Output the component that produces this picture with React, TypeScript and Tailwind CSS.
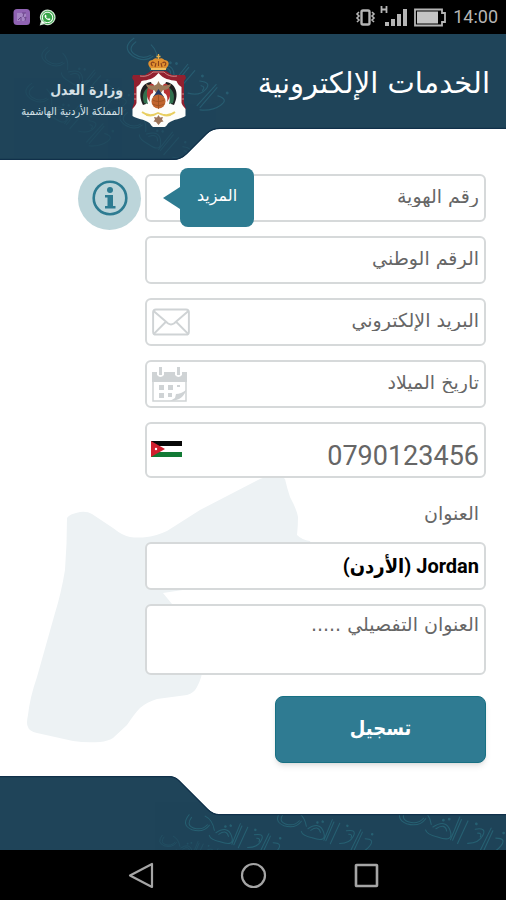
import type { InputHTMLAttributes, ReactNode } from "react";
import { FaWhatsapp } from "react-icons/fa";

const fieldClass =
  "block w-full rounded-md border-2 border-[#d6d9da] bg-white px-[5px] text-[#666] placeholder:text-[#666] placeholder:opacity-100 outline-none focus:border-[#2f7b92]";

function StatusBar() {
  return (
    <div dir="ltr" className="flex h-[34px] items-center justify-between bg-black pr-2 pl-[13px] text-[#b5b5b5]">
      <div className="flex items-center gap-2">
        <svg viewBox="0 0 18 18" className="size-[18px]" aria-hidden="true">
          <rect x="0.5" y="1" width="16.5" height="16" rx="3.5" fill="#9063b3" />
          <path d="M4 5h9v8H4z" fill="#a585c4" />
          <path d="M11 5l-1 4M9 5h4M5 12l3-3v4M11 10l2-1-1 4" stroke="#6b4589" strokeWidth="1" fill="none" />
        </svg>
        <span className="relative flex size-[17px] items-center justify-center">
          <svg viewBox="0 0 17 17" className="absolute inset-0 size-[17px]" aria-hidden="true">
            <path d="M8.7.5a7.8 7.8 0 1 1-3.6 14.7L.7 16.5l1.3-4.2A7.8 7.8 0 0 1 8.7.5z" fill="#cfe6d2" />
            <circle cx="8.7" cy="8.300" r="6.600" fill="#38a649" />
          </svg>
          <FaWhatsapp className="relative size-[13px] text-white" />
        </span>
      </div>
      <div className="flex items-center">
        <svg viewBox="0 0 92 24" className="h-6 w-[92px]" aria-hidden="true" fill="#b5b5b5">
          <rect x="6.500" y="5.500" width="8" height="14" rx="1.500" fill="none" stroke="#b5b5b5" strokeWidth="2.400" />
          <path d="M4 7l-2 2 2 2-2 2 2 2-2 2M17 7l2 2-2 2 2 2-2 2 2 2" fill="none" stroke="#b5b5b5" strokeWidth="1.600" />
          <path d="M26.500 1v7M31.500 1v7M26 4.500h6" stroke="#b5b5b5" strokeWidth="1.800" />
          <path d="M30 17h4v4h-4zM36 14h4v7h-4zM42 9h4v12h-4zM48 4h4v17h-4z" />
          <path d="M60 4.500h27v3.500h3v9h-3v3.500H60z" fill="none" stroke="#b5b5b5" strokeWidth="1.800" />
          <path d="M62 6.500h21v12H62z" fill="#c4c4c4" />
        </svg>
        <span className="ml-1.5 font-[Roboto,sans-serif] text-lg leading-6">14:00</span>
      </div>
    </div>
  );
}

function Emblem() {
  return (
    <svg viewBox="0 0 56 74" className="h-[74px] w-14 shrink-0" role="img" aria-label="شعار المملكة">
      <path d="M27.500 0v5M25.500 2.500h4" stroke="#e9b14a" strokeWidth="1.300" />
      <path d="M19.500 14c-4-4-2-8 2-8 2-2 4-2 6-1 2-1 4-1 6 1 4 0 6 4 2 8l-1 2h-14z" fill="#e0902f" />
      <path d="M21.500 12c-3-3 0-5 2-3M27.500 12V7M33.500 12c3-3 0-5-2-3M24 13l1-4M31 13l-1-4" stroke="#8c421c" strokeWidth="1.100" fill="none" />
      <path d="M20 15h15" stroke="#f1c468" strokeWidth="1.800" />
      <path d="M20 17h15l6 4h13l1 3-2 3v22l2 6H1l2-6V27l-2-3 1-3h12z" fill="#92202f" />
      <path d="M9 22c6 1 10-1 13-4h11c3 3 7 5 13 4" stroke="#d9a39e" strokeWidth="0.800" fill="none" />
      <path d="M27.500 19c5 6 11 7 18 8 1 3 3 5 5 6v16c1 3 3 4 4 6v7c-4 3-12 3-17 7-2 2-2 4-5 4h-9c-3 0-3-2-5-4-5-4-13-4-17-7v-7c1-2 3-3 4-6V33c2-1 4-3 5-6 7-1 12-2 17-8z" fill="#fdfdfb" />
      <path d="M3 40h3M3 45h3M50 40h3M50 45h3" stroke="#d9a39e" strokeWidth="0.800" />
      <path d="M12 51C6 39 11 29 20 28l2 5c-6 2-9 8-7 17z" fill="#1f1f20" />
      <path d="M13 49c-3-9 1-15 7-17l2 4c-5 2-7 7-5 14z" fill="#31704d" />
      <path d="M18 31c2-2 4-1 5 0l-1 8c-3 1-4 5-3 9-4-5-4-10-1-17z" fill="#b83334" />
      <path d="M43 51c6-12 1-22-8-23l-2 5c6 2 9 8 7 17z" fill="#1f1f20" />
      <path d="M42 49c3-9-1-15-7-17l-2 4c5 2 7 7 5 14z" fill="#31704d" />
      <path d="M37 31c-2-2-4-1-5 0l1 8c3 1 4 5 3 9 4-5 4-10 1-17z" fill="#b83334" />
      <path d="M15 30c6 2 8 2 11 0l1.500-3 1.500 3c3 2 5 2 11 0-1 5-5 6-8 6l-4.500 6-4.500-6c-3 0-7-1-8-6z" fill="#9b7a59" />
      <path d="M22 43l5.500-8 5.500 8z" fill="#243b66" />
      <circle cx="27.500" cy="47.500" r="7" fill="#c1652f" />
      <path d="M21.500 46c4 2 8 2 12 0M21.500 50c4 2 8 2 12 0M27.500 41v14" stroke="#995020" strokeWidth="0.800" fill="none" />
      <path d="M11 58c5 4 10 4 16 1 6 3 12 3 17-1M15 61c4 1 7 1 10-1M40 61c-4 1-7 1-10-1" stroke="#e9cf62" strokeWidth="1.800" fill="none" />
      <path d="M27.500 61l1.500 2.500 3-.5-1 2.500 1.500 2-2.500.5-2.500 3-2.500-3-2.500-.5 1.500-2-1-2.500 3 .5z" fill="#9c7358" />
    </svg>
  );
}

// faint band of curls that decorates the dark areas
function Flourish() {
  return (
    <g fill="none" strokeLinecap="round">
      <path d="M4 4q-6 12 6 14 12 1 16-8M20 2q8 2 12 12M34 16q10-10 16 0t-10 8q-10 0-12-4M56 2l-4 22M64 4l-5 22M72 10q10-4 8 4t-12 10M86 6l-6 24M92 14q10-2 6 6t-14 12" />
      <path d="M7 6q-4 9 4 10 9 1 13-6M37 17q7-7 10 0M58 4l-4 20M75 13q4-1 3 3M88 8l-5 22" />
      <path d="M42 8h.01M47 6h.01M72 5h.01M98 8h.01" strokeWidth="2.500" />
    </g>
  );
}

function Header() {
  return (
    <header className="relative h-[126px]">
      <svg viewBox="0 0 506 126" preserveAspectRatio="none" className="absolute inset-0 size-full" aria-hidden="true">
        <defs>
          <clipPath id="headerShape">
            <path d="M0 0h506v95H220q-8 0-13 5l-20 20q-6 6-14 6H0z" />
          </clipPath>
        </defs>
        <g clipPath="url(#headerShape)">
          <rect width="506" height="126" fill="#1f4459" />
          <g stroke="#2b677b">
            <g transform="translate(132 -2) rotate(28) scale(1.150)" opacity="0.700">
              <Flourish />
            </g>
            <g transform="translate(46 8) rotate(28)" opacity="0.250">
              <Flourish />
            </g>
            <g transform="translate(30 44) rotate(28)" opacity="0.200">
              <Flourish />
            </g>
            <g transform="translate(124 70) rotate(28)" opacity="0.300">
              <Flourish />
            </g>
          </g>
          <path d="M506 94.500H220q-8 0-13 5l-20 20q-6 6-14 6H0" fill="none" stroke="#10304a" strokeWidth="1.500" />
        </g>
      </svg>
      <div className="relative flex items-start justify-between pr-4 pl-[22px]">
        <h1 className="pt-[26px] text-[29px] leading-[46px] text-white">الخدمات الإلكترونية</h1>
        <div className="flex items-start gap-2 pt-5">
          <Emblem />
          <div className="w-[101px] pt-6 whitespace-nowrap text-[#d4e0e6] font-['DejaVu_Sans_Condensed','DejaVu_Sans',sans-serif]">
            <p className="text-sm leading-6 font-bold">وزارة العدل</p>
            <p className="text-[11px] leading-5">المملكة الأردنية الهاشمية</p>
          </div>
        </div>
      </div>
    </header>
  );
}

function Field({ label, icon, ...props }: { label: string; icon?: ReactNode } & InputHTMLAttributes<HTMLInputElement>) {
  return (
    <div className="relative min-w-0 flex-1">
      <input aria-label={label} placeholder={label} className={`${fieldClass} h-12 pb-1 text-[19px]`} {...props} />
      {icon}
    </div>
  );
}

function MailIcon() {
  return (
    <svg viewBox="0 0 40 30" className="absolute top-[10px] left-[6px] h-[29px] w-10" fill="none" stroke="#cfd3d5" strokeWidth="2" aria-hidden="true">
      <rect x="1.500" y="1.500" width="37" height="26" rx="3" />
      <path d="M2 3l15 13q3 2 6 0L38 3M2 27l13-13M38 27L25 14" />
    </svg>
  );
}

function CalendarIcon() {
  return (
    <svg viewBox="0 0 36 36" className="absolute top-[7px] left-[7px] size-9" fill="#cfd3d5" aria-hidden="true">
      <path d="M0 5h5v3q3.500 4 7 0V5h11v3q3.500 4 7 0V5h5v10H0z" />
      <path d="M7 0h3v8H7zM25 0h3v8h-3z" />
      <path d="M1 14v20h33V14" fill="none" stroke="#cfd3d5" strokeWidth="1.500" />
      <path d="M7 18h5v5H7zM16 18h5v5h-5zM25 18h3v2h-3zM7 26h5v5H7zM16 26h4v4h-4z" />
      <path d="M34 23q-5 4-10 4l-1 4-5 3q5 0 9-2 5-3 7-8z" />
    </svg>
  );
}

function Flag() {
  return (
    <svg viewBox="0 0 31 16" className="absolute top-[19px] left-[6px] h-4 w-[31px]" aria-hidden="true">
      <path d="M0 0h31v5H0z" fill="#080808" />
      <path d="M0 5h31v6H0z" fill="#fff" />
      <path d="M0 11h31v5H0z" fill="#127a35" />
      <path d="M0 0l14 8-14 8z" fill="#d01f2e" />
      <circle cx="5" cy="8" r="1.200" fill="#fff" />
    </svg>
  );
}

function MapShape() {
  return (
    <svg viewBox="0 0 300 270" className="absolute bottom-[32px] left-[26px] h-[270px] w-[300px]" aria-hidden="true">
      <path
        d="M41 44Q43 40 54 38Q61 37 66 40L87 54Q97 62 104 63Q112 64 121 63Q130 62 141 57L174 36L234 5Q252-2 259 5Q261 14 264 23Q271 36 272 43Q272 52 271 61Q276 66 284 67L294 95L137 119L146 130L176 190Q178 200 171 213Q168 219 161 221L131 225Q121 228 114 234Q109 239 101 251L87 264Q82 267 74 268Q60 269 47 267L11 259Q3 257 2 253Q0 250 2 241Q4 223 11 203L29 139Q35 120 39 96Q41 70 41 44Z"
        fill="#edf2f4"
      />
    </svg>
  );
}

function Footer() {
  return (
    <footer className="h-[74px]">
      <svg viewBox="0 0 506 74" preserveAspectRatio="none" className="block size-full" aria-hidden="true">
        <defs>
          <clipPath id="footerShape">
            <path d="M0 0h169q6 0 10 4l29 29q5 5 11 5h287v36H0z" />
          </clipPath>
        </defs>
        <g clipPath="url(#footerShape)">
          <rect width="506" height="74" fill="#1f4459" />
          <g stroke="#2a6d7e" opacity="0.700">
            <g transform="translate(186 34) rotate(12)">
              <Flourish />
            </g>
            <g transform="translate(278 30) rotate(12)">
              <Flourish />
            </g>
            <g transform="translate(400 26) rotate(12) scale(1.100)">
              <Flourish />
            </g>
            <g transform="translate(160 56) rotate(12) scale(0.700)" opacity="0.500">
              <Flourish />
            </g>
          </g>
          <path d="M0 .5h169q6 0 10 4l29 29q5 5 11 5h287" fill="none" stroke="#10304a" strokeWidth="1.500" />
        </g>
      </svg>
    </footer>
  );
}

function NavBar() {
  return (
    <nav dir="ltr" className="flex h-[50px] items-center justify-center gap-[86px] bg-black text-[#a5a5a5]">
      <button type="button" aria-label="رجوع" className="size-[27px]">
        <svg viewBox="0 0 27 27" fill="none" stroke="currentColor" strokeWidth="2.200" strokeLinejoin="round">
          <path d="M25 2v23L3 13.500z" />
        </svg>
      </button>
      <button type="button" aria-label="الرئيسية" className="size-[27px]">
        <svg viewBox="0 0 27 27" fill="none" stroke="currentColor" strokeWidth="2.200">
          <circle cx="13.500" cy="13.500" r="11.500" />
        </svg>
      </button>
      <button type="button" aria-label="التطبيقات" className="size-[27px]">
        <svg viewBox="0 0 27 27" fill="none" stroke="currentColor" strokeWidth="2.600" strokeLinejoin="round">
          <rect x="3" y="3" width="21" height="21" rx="0.500" />
        </svg>
      </button>
    </nav>
  );
}

export default function App() {
  return (
    <div dir="rtl" lang="ar" className="flex min-h-screen flex-col bg-white font-['DejaVu_Sans',sans-serif]">
      <StatusBar />
      <Header />
      <main className="relative flex-1 pt-[14px] pb-3">
        <MapShape />
        <form className="relative flex flex-col gap-[14px]" onSubmit={(e) => e.preventDefault()}>
          <div className="flex items-center pr-5">
            <Field
              label="رقم الهوية"
              icon={
                <div role="tooltip" className="absolute top-[-6px] left-[17px] flex items-center" dir="ltr">
                  <svg viewBox="0 0 18 24" className="h-6 w-[18px]" fill="#2d7b91" aria-hidden="true">
                    <path d="M1 12L18 1v22z" />
                  </svg>
                  <span className="flex h-[59px] w-[74px] items-center justify-center rounded-lg bg-[#2d7b91] pb-1 text-base text-white">
                    المزيد
                  </span>
                </div>
              }
            />
            <div className="w-[145px] pr-1">
              <button
                type="button"
                aria-label="معلومات"
                className="-my-2 flex size-[63px] items-center justify-center rounded-full bg-[#bcd5da]"
              >
                <svg viewBox="0 0 36 36" className="size-9" aria-hidden="true">
                  <circle cx="18" cy="18" r="16.300" fill="none" stroke="#2d7b91" strokeWidth="2.600" />
                  <circle cx="18" cy="10" r="3" fill="#2d7b91" />
                  <path d="M13 15h8v11h2.500v2.500H13V26h2.500v-8.500H13z" fill="#2d7b91" />
                </svg>
              </button>
            </div>
          </div>
          <div className="flex flex-col gap-[14px] pr-5 pl-[145px]">
            <Field label="الرقم الوطني" />
            <Field label="البريد الإلكتروني" type="email" icon={<MailIcon />} />
            <Field label="تاريخ الميلاد" icon={<CalendarIcon />} />
            <div className="relative">
              <input
                type="tel"
                dir="ltr"
                aria-label="رقم الهاتف"
                placeholder="0790123456"
                className={`${fieldClass} h-14 pt-3 text-right font-[Roboto,sans-serif] text-[27px]`}
              />
              <Flag />
            </div>
            <div>
              <label htmlFor="country" className="flex h-[50px] items-center pr-[7px] pb-2 text-[19px] text-[#666]">
                العنوان
              </label>
              <select
                id="country"
                className={`${fieldClass} h-12 appearance-none font-[Roboto,'DejaVu_Sans_Condensed','DejaVu_Sans',sans-serif] text-xl font-bold text-black`}
              >
                <option>Jordan (الأردن)</option>
              </select>
            </div>
            <textarea
              aria-label="العنوان التفصيلي"
              placeholder="العنوان التفصيلي ....."
              className={`${fieldClass} h-[71px] resize-none pt-1 text-[19px]`}
            />
          </div>
          <div className="pt-[7px] pr-5">
            <button
              type="submit"
              className="h-[67px] w-[211px] rounded-lg border border-[#177083] bg-[#2f7b92] pb-1 font-['DejaVu_Sans_Condensed','DejaVu_Sans',sans-serif] text-xl font-bold text-white shadow-md"
            >
              تسجيل
            </button>
          </div>
        </form>
      </main>
      <Footer />
      <NavBar />
    </div>
  );
}
